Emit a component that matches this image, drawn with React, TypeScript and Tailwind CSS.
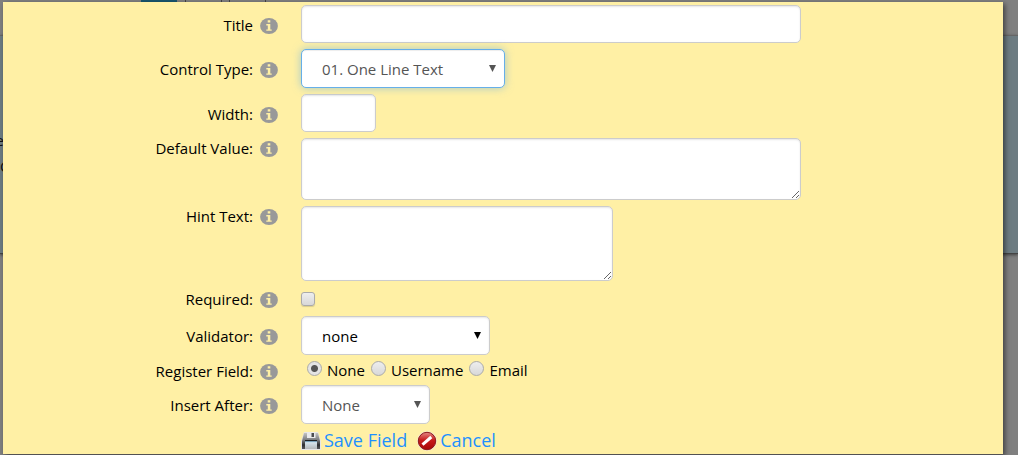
import { useState } from "react";
import type { ReactNode } from "react";

const boxClass =
  "block max-w-full rounded-[5px] border border-[#ccc] bg-white text-[15px] text-[#555] shadow-[inset_0_1px_2px_rgba(0,0,0,0.1)] outline-none";

function InfoIcon() {
  return (
    <svg className="h-4 w-[18px] shrink-0" viewBox="0 0 18 16" aria-hidden="true">
      <ellipse cx="9" cy="8" rx="8.9" ry="8" fill="#999" />
      <path
        d="M7.7 2.200h2.600v2.200H7.700zM6.300 6h4v5.400h1.400v1.400H6.300v-1.400h1.500V7.400H6.300z"
        fill="#fff0a5"
      />
    </svg>
  );
}

function SaveIcon() {
  return (
    <svg className="mt-px h-5 w-5" viewBox="0 0 20 20" aria-hidden="true">
      <defs>
        <linearGradient id="disk" x1="0" y1="0" x2="0" y2="1">
          <stop offset="0" stopColor="#c4c4c4" />
          <stop offset="0.45" stopColor="#77797c" />
          <stop offset="0.75" stopColor="#2d2f31" />
          <stop offset="1" stopColor="#55575a" />
        </linearGradient>
        <linearGradient id="diskLabel" x1="0" y1="0" x2="0" y2="1">
          <stop offset="0" stopColor="#3f9bd0" />
          <stop offset="0.3" stopColor="#d5e3ea" />
          <stop offset="1" stopColor="#b4b8ba" />
        </linearGradient>
      </defs>
      <path d="M3 1h14l3 9v9H0v-9z" fill="#e6e6e6" />
      <path d="M3 2h14l2 8v8H1v-8z" fill="url(#disk)" />
      <path d="M6 1h8.500v6H6z" fill="#e9eaeb" />
      <path d="M10.500 2h2.500v4h-2.500z" fill="#4b4d50" />
      <path d="M4 9h12v9H4z" fill="url(#diskLabel)" />
      <path d="M4 9h12v1.200H4z" fill="#1e1f21" />
    </svg>
  );
}

function CancelIcon() {
  return (
    <svg className="mt-px h-5 w-5" viewBox="0 0 20 20" aria-hidden="true">
      <defs>
        <linearGradient id="stop" x1="0" y1="0" x2="0" y2="1">
          <stop offset="0" stopColor="#e58a86" />
          <stop offset="0.45" stopColor="#c81b1b" />
          <stop offset="1" stopColor="#a80808" />
        </linearGradient>
      </defs>
      <circle cx="10" cy="10" r="9.800" fill="#f3e3d5" />
      <circle cx="10" cy="10" r="8.700" fill="url(#stop)" stroke="#8d1a1a" strokeWidth="1" />
      <path d="M5.500 13.600 14.300 6" stroke="#fff" strokeWidth="3" />
    </svg>
  );
}

type RowProps = { label: string; htmlFor?: string; className?: string; children: ReactNode };

function Row({ label, htmlFor, className = "items-center *:first:pt-0.5", children }: RowProps) {
  return (
    <div className={`flex ${className}`}>
      <div className="flex w-[298px] shrink-0 items-center justify-end gap-[7px] pr-[23px]">
        <label htmlFor={htmlFor} className="pb-0.5 leading-5">
          {label}
        </label>
        <InfoIcon />
      </div>
      <div className="min-w-0 flex-1">{children}</div>
    </div>
  );
}

type SelectProps = { id: string; options: string[]; className: string; active?: boolean };

function Select({ id, options, className, active }: SelectProps) {
  return (
    <div className={`relative max-w-full ${className}`}>
      <select
        id={id}
        className={`block h-[39px] w-full appearance-none rounded-[5px] border bg-white pt-0.5 pr-8 pl-5 text-[15px] outline-none ${
          active
            ? "border-[#66afe9] shadow-[inset_0_1px_1px_rgba(0,0,0,0.075),0_0_8px_rgba(102,175,233,0.6)]"
            : "border-[#ccc] shadow-[inset_0_1px_2px_rgba(0,0,0,0.1)]"
        }`}
      >
        {options.map((option) => (
          <option key={option}>{option}</option>
        ))}
      </select>
      <svg className="pointer-events-none absolute top-4 right-[9px] h-[7px] w-[7px]" viewBox="0 0 7 7" aria-hidden="true">
        <path d="M0 0h7L3.500 7z" fill="currentColor" />
      </svg>
    </div>
  );
}

// The page that stays dimmed under the dialog
function Backdrop() {
  return (
    <div className="absolute inset-0" aria-hidden="true">
      <div className="flex h-[35px] items-start pl-[141px]">
        <div className="h-full w-9 bg-[#19566e]" />
        <div className="ml-2 h-full w-[37px] border-x border-[#444]" />
        <div className="ml-[7px] h-full w-[37px] border-x border-[#444]" />
      </div>
      <div className="h-[219px] border-t border-b border-t-[#666] border-b-[#444] bg-[#6d7c82] pt-[91px] text-[15px] leading-[26px] text-[#111] shadow-[0_1px_3px_rgba(0,0,0,0.5)]">
        <div className="flex w-1 justify-end">e</div>
        <div>C</div>
      </div>
    </div>
  );
}

export default function App() {
  const [register, setRegister] = useState("None");

  return (
    <div className="relative min-h-screen overflow-hidden bg-[#808080] pt-0.5 pr-[15px] pb-px pl-[3px] font-['Open_Sans',sans-serif] text-[15px] text-black">
      <Backdrop />
      <form
        className="relative flex flex-col gap-1.5 bg-[#fff0a5] pt-[3px] shadow-[2px_2px_5px_rgba(0,0,0,0.5)]"
        onSubmit={(e) => e.preventDefault()}
      >
        <Row label="Title" htmlFor="title" className="items-center *:first:pt-1">
          <input id="title" type="text" className={`${boxClass} h-[38px] w-[500px] px-3`} />
        </Row>
        <Row label="Control Type:" htmlFor="controlType">
          <Select id="controlType" options={["01. One Line Text"]} className="w-[204px] text-[#555]" active />
        </Row>
        <Row label="Width:" htmlFor="width" className="items-center *:first:pt-1">
          <input id="width" type="text" className={`${boxClass} h-[38px] w-[75px] px-3`} />
        </Row>
        <Row label="Default Value:" htmlFor="defaultValue" className="items-start">
          <textarea id="defaultValue" className={`${boxClass} h-[62px] w-[500px] px-3 py-1.5`} />
        </Row>
        <Row label="Hint Text:" htmlFor="hintText" className="items-start">
          <textarea id="hintText" className={`${boxClass} h-[75px] w-[312px] px-3 py-1.5`} />
        </Row>
        <Row label="Required:" htmlFor="required" className="h-[23px] items-center *:first:pt-0.5">
          <input
            id="required"
            type="checkbox"
            className="block size-3.5 appearance-none rounded-[3px] border border-[#aaa] bg-linear-to-b from-[#eee] to-[#d8d8d8] shadow-[0_1px_1px_rgba(0,0,0,0.15)] checked:to-[#888]"
          />
        </Row>
        <Row label="Validator:" htmlFor="validator">
          <Select id="validator" options={["none"]} className="w-[189px] text-black" />
        </Row>
        <Row label="Register Field:" className="h-[18px] items-center *:first:pt-1">
          <div role="radiogroup" aria-label="Register Field" className="flex gap-1.5 pl-1.5">
            {["None", "Username", "Email"].map((name) => (
              <label key={name} className="flex items-start gap-[5px] leading-[18px]">
                <input
                  type="radio"
                  name="register"
                  checked={register === name}
                  onChange={() => setRegister(name)}
                  className="size-[15px] appearance-none rounded-full border border-[#aaa] bg-linear-to-b from-[#eee] to-[#d8d8d8] checked:bg-[radial-gradient(circle,#555_0_3px,#e4e4e4_4px)]"
                />
                {name}
              </label>
            ))}
          </div>
        </Row>
        <Row label="Insert After:" htmlFor="insertAfter">
          <Select id="insertAfter" options={["None"]} className="w-[129px] text-[#555]" />
        </Row>
        <div className="flex h-6 items-start gap-2.5 pl-[298px] text-[18px] leading-5 text-[#1e90ff]">
          <button type="submit" className="flex items-start gap-[3px]">
            <SaveIcon />
            Save Field
          </button>
          <button type="button" className="flex items-start gap-[3px]">
            <CancelIcon />
            Cancel
          </button>
        </div>
      </form>
    </div>
  );
}
